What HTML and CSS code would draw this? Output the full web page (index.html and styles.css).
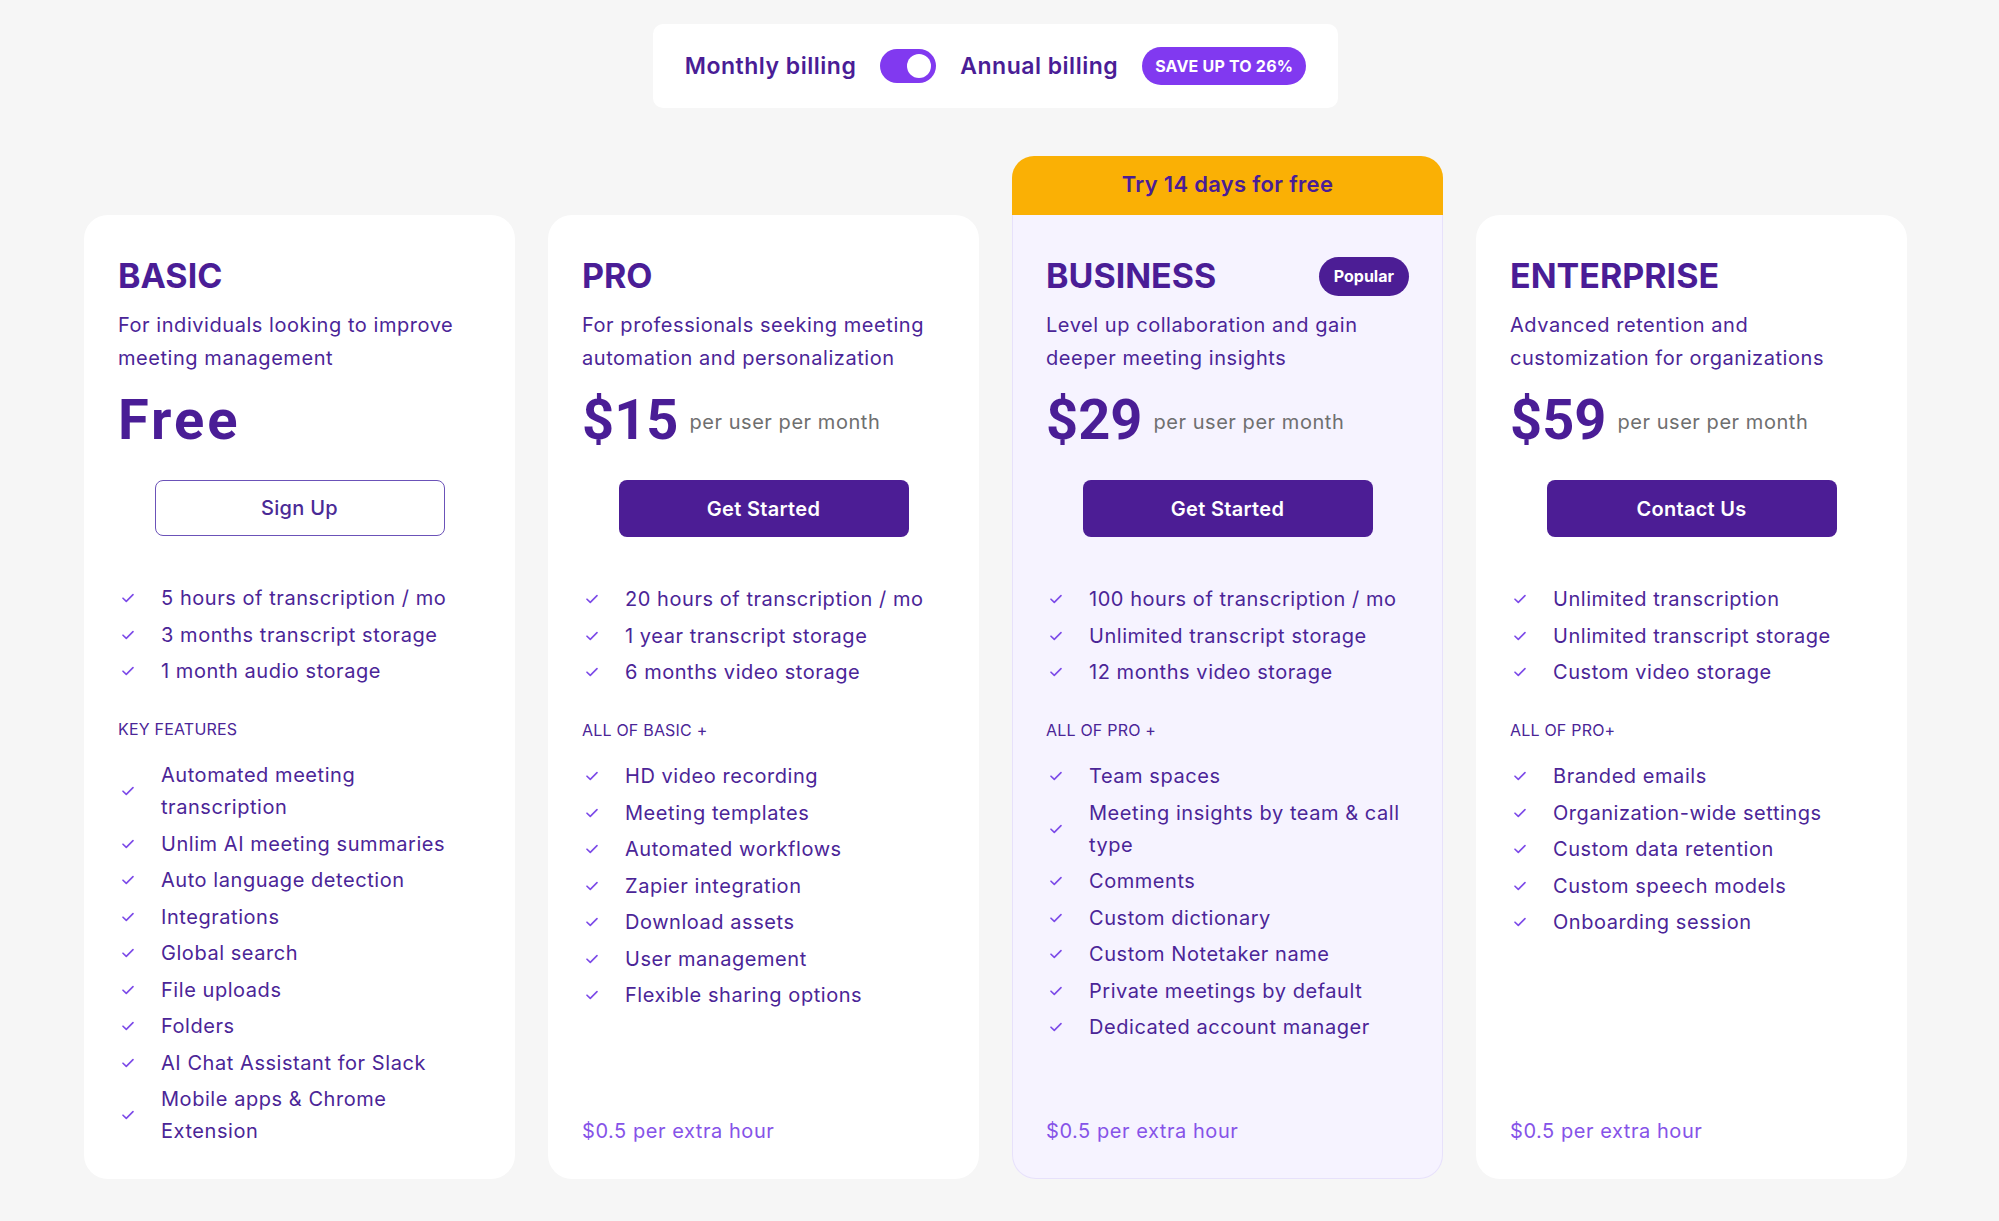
FILE: index.html
```html
<!DOCTYPE html>
<html lang="en">
<head>
<meta charset="utf-8">
<title>Pricing</title>
<link rel="stylesheet" href="styles.css">
</head>
<body>
<main class="page">
  <div class="billing">
    <span class="billing-label">Monthly billing</span>
    <span class="switch"><span class="knob"></span></span>
    <span class="billing-label">Annual billing</span>
    <span class="save">SAVE UP TO 26%</span>
  </div>

  <div class="plans">
    <div class="trial">Try 14 days for free</div>

    <section class="card">
      <div class="card-head"><h2 class="plan-name">BASIC</h2></div>
      <p class="desc">For individuals looking to improve<br>meeting management</p>
      <div class="price"><span class="amount free">Free</span></div>
      <a class="btn btn-outline">Sign Up</a>
      <ul class="features first">
        <li><svg class="check" viewBox="0 0 12 10"><path d="M1 5.2 4.3 8.4 11 1.6"/></svg><span>5 hours of transcription / mo</span></li>
        <li><svg class="check" viewBox="0 0 12 10"><path d="M1 5.2 4.3 8.4 11 1.6"/></svg><span>3 months transcript storage</span></li>
        <li><svg class="check" viewBox="0 0 12 10"><path d="M1 5.2 4.3 8.4 11 1.6"/></svg><span>1 month audio storage</span></li>
      </ul>
      <div class="group-label">KEY FEATURES</div>
      <ul class="features">
        <li><svg class="check" viewBox="0 0 12 10"><path d="M1 5.2 4.3 8.4 11 1.6"/></svg><span>Automated meeting<br>transcription</span></li>
        <li><svg class="check" viewBox="0 0 12 10"><path d="M1 5.2 4.3 8.4 11 1.6"/></svg><span>Unlim AI meeting summaries</span></li>
        <li><svg class="check" viewBox="0 0 12 10"><path d="M1 5.2 4.3 8.4 11 1.6"/></svg><span>Auto language detection</span></li>
        <li><svg class="check" viewBox="0 0 12 10"><path d="M1 5.2 4.3 8.4 11 1.6"/></svg><span>Integrations</span></li>
        <li><svg class="check" viewBox="0 0 12 10"><path d="M1 5.2 4.3 8.4 11 1.6"/></svg><span>Global search</span></li>
        <li><svg class="check" viewBox="0 0 12 10"><path d="M1 5.2 4.3 8.4 11 1.6"/></svg><span>File uploads</span></li>
        <li><svg class="check" viewBox="0 0 12 10"><path d="M1 5.2 4.3 8.4 11 1.6"/></svg><span>Folders</span></li>
        <li><svg class="check" viewBox="0 0 12 10"><path d="M1 5.2 4.3 8.4 11 1.6"/></svg><span>AI Chat Assistant for Slack</span></li>
        <li><svg class="check" viewBox="0 0 12 10"><path d="M1 5.2 4.3 8.4 11 1.6"/></svg><span>Mobile apps &amp; Chrome<br>Extension</span></li>
      </ul>
    </section>

    <section class="card">
      <div class="card-head"><h2 class="plan-name">PRO</h2></div>
      <p class="desc">For professionals seeking meeting<br>automation and personalization</p>
      <div class="price"><span class="amount">$15</span><span class="per">per user per month</span></div>
      <a class="btn btn-solid">Get Started</a>
      <ul class="features first">
        <li><svg class="check" viewBox="0 0 12 10"><path d="M1 5.2 4.3 8.4 11 1.6"/></svg><span>20 hours of transcription / mo</span></li>
        <li><svg class="check" viewBox="0 0 12 10"><path d="M1 5.2 4.3 8.4 11 1.6"/></svg><span>1 year transcript storage</span></li>
        <li><svg class="check" viewBox="0 0 12 10"><path d="M1 5.2 4.3 8.4 11 1.6"/></svg><span>6 months video storage</span></li>
      </ul>
      <div class="group-label">ALL OF BASIC +</div>
      <ul class="features">
        <li><svg class="check" viewBox="0 0 12 10"><path d="M1 5.2 4.3 8.4 11 1.6"/></svg><span>HD video recording</span></li>
        <li><svg class="check" viewBox="0 0 12 10"><path d="M1 5.2 4.3 8.4 11 1.6"/></svg><span>Meeting templates</span></li>
        <li><svg class="check" viewBox="0 0 12 10"><path d="M1 5.2 4.3 8.4 11 1.6"/></svg><span>Automated workflows</span></li>
        <li><svg class="check" viewBox="0 0 12 10"><path d="M1 5.2 4.3 8.4 11 1.6"/></svg><span>Zapier integration</span></li>
        <li><svg class="check" viewBox="0 0 12 10"><path d="M1 5.2 4.3 8.4 11 1.6"/></svg><span>Download assets</span></li>
        <li><svg class="check" viewBox="0 0 12 10"><path d="M1 5.2 4.3 8.4 11 1.6"/></svg><span>User management</span></li>
        <li><svg class="check" viewBox="0 0 12 10"><path d="M1 5.2 4.3 8.4 11 1.6"/></svg><span>Flexible sharing options</span></li>
      </ul>
      <p class="extra">$0.5 per extra hour</p>
    </section>

    <section class="card featured">
      <div class="card-head"><h2 class="plan-name">BUSINESS</h2><span class="popular">Popular</span></div>
      <p class="desc">Level up collaboration and gain<br>deeper meeting insights</p>
      <div class="price"><span class="amount">$29</span><span class="per">per user per month</span></div>
      <a class="btn btn-solid">Get Started</a>
      <ul class="features first">
        <li><svg class="check" viewBox="0 0 12 10"><path d="M1 5.2 4.3 8.4 11 1.6"/></svg><span>100 hours of transcription / mo</span></li>
        <li><svg class="check" viewBox="0 0 12 10"><path d="M1 5.2 4.3 8.4 11 1.6"/></svg><span>Unlimited transcript storage</span></li>
        <li><svg class="check" viewBox="0 0 12 10"><path d="M1 5.2 4.3 8.4 11 1.6"/></svg><span>12 months video storage</span></li>
      </ul>
      <div class="group-label">ALL OF PRO +</div>
      <ul class="features">
        <li><svg class="check" viewBox="0 0 12 10"><path d="M1 5.2 4.3 8.4 11 1.6"/></svg><span>Team spaces</span></li>
        <li><svg class="check" viewBox="0 0 12 10"><path d="M1 5.2 4.3 8.4 11 1.6"/></svg><span>Meeting insights by team &amp; call<br>type</span></li>
        <li><svg class="check" viewBox="0 0 12 10"><path d="M1 5.2 4.3 8.4 11 1.6"/></svg><span>Comments</span></li>
        <li><svg class="check" viewBox="0 0 12 10"><path d="M1 5.2 4.3 8.4 11 1.6"/></svg><span>Custom dictionary</span></li>
        <li><svg class="check" viewBox="0 0 12 10"><path d="M1 5.2 4.3 8.4 11 1.6"/></svg><span>Custom Notetaker name</span></li>
        <li><svg class="check" viewBox="0 0 12 10"><path d="M1 5.2 4.3 8.4 11 1.6"/></svg><span>Private meetings by default</span></li>
        <li><svg class="check" viewBox="0 0 12 10"><path d="M1 5.2 4.3 8.4 11 1.6"/></svg><span>Dedicated account manager</span></li>
      </ul>
      <p class="extra">$0.5 per extra hour</p>
    </section>

    <section class="card">
      <div class="card-head"><h2 class="plan-name">ENTERPRISE</h2></div>
      <p class="desc">Advanced retention and<br>customization for organizations</p>
      <div class="price"><span class="amount">$59</span><span class="per">per user per month</span></div>
      <a class="btn btn-solid">Contact Us</a>
      <ul class="features first">
        <li><svg class="check" viewBox="0 0 12 10"><path d="M1 5.2 4.3 8.4 11 1.6"/></svg><span>Unlimited transcription</span></li>
        <li><svg class="check" viewBox="0 0 12 10"><path d="M1 5.2 4.3 8.4 11 1.6"/></svg><span>Unlimited transcript storage</span></li>
        <li><svg class="check" viewBox="0 0 12 10"><path d="M1 5.2 4.3 8.4 11 1.6"/></svg><span>Custom video storage</span></li>
      </ul>
      <div class="group-label">ALL OF PRO+</div>
      <ul class="features">
        <li><svg class="check" viewBox="0 0 12 10"><path d="M1 5.2 4.3 8.4 11 1.6"/></svg><span>Branded emails</span></li>
        <li><svg class="check" viewBox="0 0 12 10"><path d="M1 5.2 4.3 8.4 11 1.6"/></svg><span>Organization-wide settings</span></li>
        <li><svg class="check" viewBox="0 0 12 10"><path d="M1 5.2 4.3 8.4 11 1.6"/></svg><span>Custom data retention</span></li>
        <li><svg class="check" viewBox="0 0 12 10"><path d="M1 5.2 4.3 8.4 11 1.6"/></svg><span>Custom speech models</span></li>
        <li><svg class="check" viewBox="0 0 12 10"><path d="M1 5.2 4.3 8.4 11 1.6"/></svg><span>Onboarding session</span></li>
      </ul>
      <p class="extra">$0.5 per extra hour</p>
    </section>
  </div>
</main>
</body>
</html>
```

FILE: styles.css
```css
* { box-sizing: border-box; }

html, body {
  margin: 0;
  padding: 0;
}

body {
  background: #f6f6f6;
  font-family: "Inter", "Noto Sans", sans-serif;
  color: #4c1d95;
}

.page {
  display: flex;
  flex-direction: column;
  align-items: center;
  padding: 24px 8px 40px 0;
}

/* ---------- billing toggle ---------- */
.billing {
  display: flex;
  align-items: center;
  gap: 24px;
  height: 84px;
  padding: 0 32px;
  background: #ffffff;
  border-radius: 10px;
}

.billing-label {
  font-size: 23px;
  font-weight: 600;
  letter-spacing: 0.5px;
  color: #4a1d96;
}

.switch {
  display: flex;
  align-items: center;
  justify-content: flex-end;
  width: 56px;
  height: 34px;
  padding: 0 5px;
  border-radius: 17px;
  background: #8139f0;
}

.knob {
  width: 24px;
  height: 24px;
  border-radius: 50%;
  background: #ffffff;
}

.save {
  display: flex;
  align-items: center;
  height: 38px;
  padding: 0 13px;
  border-radius: 19px;
  background: #8139f0;
  color: #ffffff;
  font-size: 16px;
  font-weight: 700;
  letter-spacing: 0.2px;
}

/* ---------- plans ---------- */
.plans {
  display: grid;
  grid-template-columns: repeat(4, 431px);
  grid-template-rows: 59px 964px;
  column-gap: 33px;
  margin-top: 48px;
}

.trial {
  grid-column: 3;
  grid-row: 1;
  display: flex;
  align-items: center;
  justify-content: center;
  padding-bottom: 3px;
  background: #fab005;
  border-radius: 22px 22px 0 0;
  font-size: 22px;
  font-weight: 600;
  letter-spacing: 0.3px;
  color: #4a1d96;
}

.card {
  grid-row: 2;
  display: flex;
  flex-direction: column;
  padding: 36px 34px 32px;
  background: #ffffff;
  border-radius: 24px;
}

.card.featured {
  background: #f6f3ff;
  border: 1px solid #e7e1fb;
  border-top: none;
  border-radius: 0 0 24px 24px;
  padding: 36px 33px 31px;
}

.card-head {
  display: flex;
  align-items: center;
  justify-content: space-between;
  height: 50px;
}

.plan-name {
  margin: 0;
  font-size: 34px;
  line-height: 50px;
  font-weight: 700;
  color: #4a1d96;
}

.popular {
  display: flex;
  align-items: center;
  height: 39px;
  padding: 0 15px;
  border-radius: 20px;
  background: #4c1d95;
  color: #ffffff;
  font-size: 16px;
  font-weight: 700;
}

.desc {
  margin: 8px 0 0;
  font-size: 20px;
  line-height: 33px;
  letter-spacing: 0.55px;
  color: #4b2597;
}

.price {
  display: flex;
  align-items: center;
  gap: 11px;
  height: 64px;
  margin-top: 13px;
}

.amount {
  font-family: "Roboto", sans-serif;
  font-size: 56px;
  font-weight: 700;
  color: #4a1d96;
}

.amount.free {
  letter-spacing: 3px;
}

.per {
  font-size: 20px;
  letter-spacing: 0.55px;
  color: #6f6f6f;
  padding-top: 4px;
}

.btn {
  display: flex;
  align-items: center;
  justify-content: center;
  align-self: center;
  width: 290px;
  height: 57px;
  margin-top: 28px;
  border-radius: 8px;
  font-size: 20px;
  letter-spacing: 0.3px;
  cursor: pointer;
}

.btn-outline {
  background: #ffffff;
  border: 1.5px solid #6b52b8;
  color: #4a2a96;
  font-weight: 500;
}

.btn-solid {
  background: #4c1d95;
  color: #ffffff;
  font-weight: 600;
}

.features {
  list-style: none;
  margin: 18px 0 0;
  padding: 0;
  display: flex;
  flex-direction: column;
  gap: 4.5px;
}

.features.first {
  margin-top: 46px;
}

.features li {
  display: flex;
  align-items: center;
  font-size: 20px;
  line-height: 32px;
  letter-spacing: 0.55px;
  color: #4b2597;
}

.check {
  flex: none;
  width: 12px;
  height: 10px;
  margin: 0 27px 0 4px;
  fill: none;
  stroke: #7c4ae8;
  stroke-width: 1.6;
  stroke-linecap: round;
  stroke-linejoin: round;
}

.group-label {
  margin-top: 30px;
  font-size: 16px;
  line-height: 24px;
  letter-spacing: 0.2px;
  color: #4b2597;
}

.extra {
  margin: auto 0 0;
  font-size: 20px;
  line-height: 32px;
  letter-spacing: 0.55px;
  color: #8653e8;
}
```
